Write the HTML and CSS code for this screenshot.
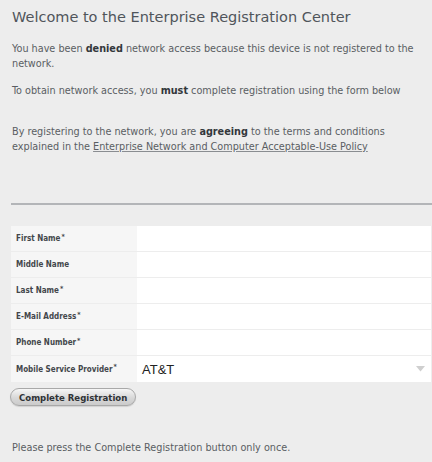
FILE: index.html
```html
<!DOCTYPE html>
<html>
<head>
<meta charset="utf-8">
<link rel="stylesheet" href="styles.css">
</head>
<body>
<div class="page">
  <h1 class="title">Welcome to the Enterprise Registration Center</h1>
  <p class="text p1">You have been <b>denied</b> network access because this device is not registered to the network.</p>
  <p class="text p2">To obtain network access, you <b>must</b> complete registration using the form below</p>
  <p class="text p3">By registering to the network, you are <b>agreeing</b> to the terms and conditions explained in the <a class="policy" href="#">Enterprise Network and Computer Acceptable-Use Policy</a></p>
  <div class="rule"></div>
  <form class="form">
    <div class="fields">
      <div class="row"><label class="label">First Name<span class="req">*</span></label><input class="field" type="text"></div>
      <div class="row"><label class="label">Middle Name</label><input class="field" type="text"></div>
      <div class="row"><label class="label">Last Name<span class="req">*</span></label><input class="field" type="text"></div>
      <div class="row"><label class="label">E-Mail Address<span class="req">*</span></label><input class="field" type="text"></div>
      <div class="row"><label class="label">Phone Number<span class="req">*</span></label><input class="field" type="text"></div>
      <div class="row last"><label class="label small">Mobile Service Provider<span class="req">*</span></label>
        <div class="select"><span class="select-value">AT&amp;T</span><svg class="caret" width="9" height="6" viewBox="0 0 9 6"><path d="M0 0H9L4.5 5.5Z" fill="#cfcfcf"/></svg></div>
      </div>
    </div>
    <button class="submit" type="button">Complete Registration</button>
  </form>
  <p class="text note">Please press the Complete Registration button only once.</p>
</div>
</body>
</html>
```
FILE: styles.css
```css
html, body {
  margin: 0;
  padding: 0;
  background: #ededed;
}
.page {
  padding: 0 1px 0 11px;
  font-family: "DejaVu Sans Condensed", "DejaVu Sans", sans-serif;
  font-stretch: condensed;
  color: #5a5e63;
}
.title {
  margin: 8px 0 0 1px;
  font-family: "DejaVu Sans", sans-serif;
  font-stretch: normal;
  font-size: 14.5px;
  line-height: 18px;
  font-weight: normal;
  color: #50555b;
}
.text {
  font-size: 10.75px;
  line-height: 15px;
  margin: 0 0 0 1px;
}
.text b {
  color: #33373b;
}
.p1 { margin-top: 15px; }
.p2 { margin-top: 12px; }
.p3 { margin-top: 26px; }
.policy {
  color: #5a5e63;
  text-decoration: underline;
  text-decoration-color: #8a8d91;
}
.rule {
  margin-top: 49px;
  margin-right: -1px;
  height: 2px;
  background: #b3b5b8;
}
.form {
  margin: 21px 0 0 0;
}
.fields {
  display: flex;
  flex-direction: column;
}
.row {
  display: grid;
  grid-template-columns: 126px 1fr;
  height: 25px;
  border-bottom: 1px solid #ededed;
}
.row.last {
  height: 26px;
  border-bottom: 0;
}
.label {
  background: #f6f6f6;
  font-size: 8px;
  font-weight: bold;
  color: #43474b;
  display: flex;
  align-items: center;
  padding-left: 5px;
}
.req {
  font-size: 7px;
  position: relative;
  top: -2px;
  margin-left: 1px;
}
.field {
  border: 0;
  margin: 0;
  padding: 0;
  background: #fff;
  outline: none;
}
.select {
  background: #fff;
  display: flex;
  align-items: center;
  justify-content: space-between;
  padding: 0 6px 0 5px;
}
.select-value {
  font-family: "Liberation Sans", Arial, sans-serif;
  font-stretch: normal;
  font-size: 13px;
  color: #222;
}
.caret {
  display: block;
}
.submit {
  margin: 6px 0 0 -1px;
  height: 18px;
  padding: 0 8px 0 8px;
  border: 1px solid #a8a8a8;
  border-radius: 9px;
  background: linear-gradient(#f6f6f6, #d8d8d8 55%, #cbcbcb);
  box-shadow: 0 1px 1px rgba(0,0,0,0.12);
  font-family: "DejaVu Sans Condensed", "DejaVu Sans", sans-serif;
  font-stretch: condensed;
  font-size: 9.5px;
  font-weight: bold;
  color: #2f3236;
  line-height: 15px;
  display: block;
}
.note {
  margin-top: 34px;
}
```
